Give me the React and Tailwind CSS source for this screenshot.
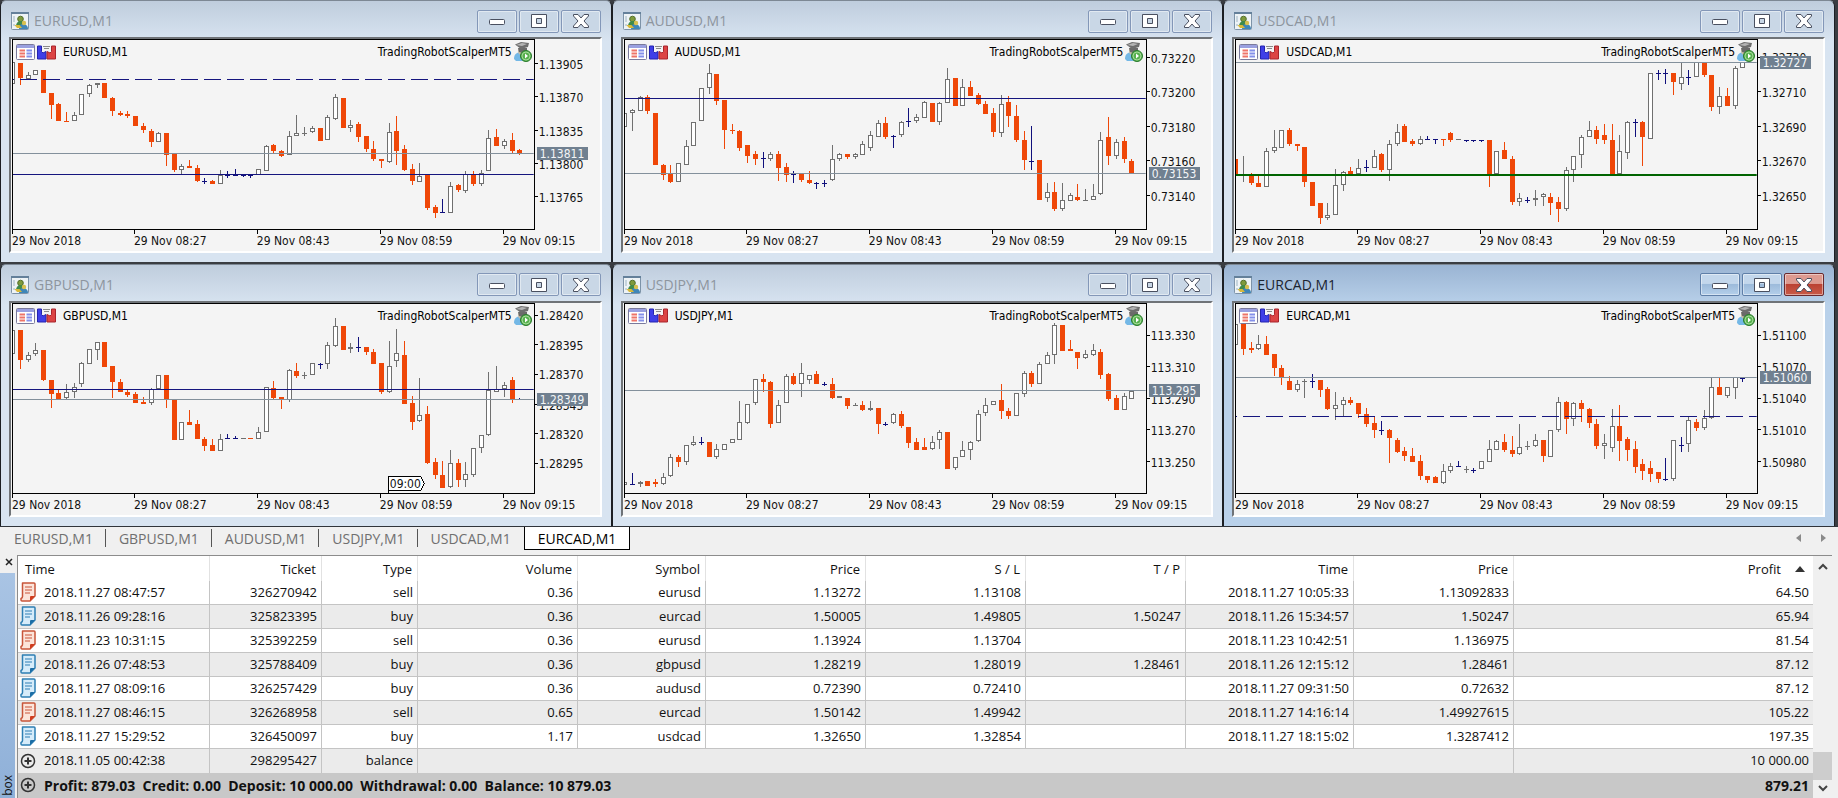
import { clsx } from 'clsx'

const PLOT = { left: 13, top: 40, right: 534, bottom: 230 }
const STEP = 7.68

// Candles run left to right, one per minute: kind + high,top,bottom,low in thirds of a pixel.
// u = up, d = down, j = doji, g = grey doji
const CHARTS = [
  {
    symbol: 'EURUSD',
    base: 118,
    ticks: [['1.13905', 191], ['1.13870', 289], ['1.13835', 391], ['1.13800', 491], ['1.13765', 589]],
    bid: ['1.13811', 459],
    lines: [{ y: 238, dashed: true }, { y: 523 }],
    candles:
      'u184,184,252,252 d187,187,233,254 u215,223,236,236 u208,208,223,223 d208,208,277,277 d277,277,313,357 d309,312,362,362 d334,361,365,365 u334,344,363,363 u280,280,344,344 ' +
      'u250,254,281,290 u247,249,255,263 d248,248,292,292 d290,292,332,348 d333,337,345,348 d332,340,347,354 d346,346,376,376 d367,376,388,397 d385,391,426,440 u396,398,424,424 ' +
      'd398,398,465,497 d460,460,510,516 u490,496,508,523 d478,498,503,504 d495,504,543,545 j534,543,543,552 d538,541,551,552 u510,523,550,552 j513,524,524,533 j507,524,524,524 ' +
      'j524,525,525,531 j524,525,525,532 u507,507,523,523 u433,436,511,511 d431,435,453,459 d450,453,466,469 u392,406,463,465 u343,397,406,408 g379,398,398,406 u378,384,395,399 ' +
      'd384,384,422,422 u343,351,418,420 u280,291,355,358 d292,292,382,382 u358,373,382,395 d366,372,410,425 d408,408,447,455 d423,447,476,482 d475,475,483,503 u369,395,485,488 ' +
      'd347,392,451,495 d434,447,508,513 d490,507,542,554 u489,528,545,545 d523,523,623,630 d615,621,638,654 j597,636,636,637 u545,556,637,638 d551,555,570,575 u513,522,571,577 ' +
      'd513,522,551,557 u508,517,551,558 u389,412,511,513 d386,411,437,438 u416,421,437,446 d399,420,452,459 d445,449,459,464',
  },
  {
    symbol: 'AUDUSD',
    base: 118,
    ticks: [['0.73220', 172], ['0.73200', 274], ['0.73180', 379], ['0.73160', 482], ['0.73140', 586]],
    bid: ['0.73153', 520],
    lines: [{ y: 296 }],
    candles:
      'u337,337,379,379 u325,330,338,392 u287,289,332,332 d285,289,332,340 d337,337,493,495 d490,493,523,540 d495,520,545,547 u487,487,545,545 u418,436,494,494 u364,364,436,436 ' +
      'u262,262,363,363 u190,217,263,281 d222,222,302,314 d300,300,390,447 d372,388,392,400 d389,391,442,452 d435,435,468,488 d451,462,476,494 j454,474,474,503 u456,461,475,483 ' +
      'd451,461,502,541 d487,501,524,545 j513,522,522,547 d520,520,540,545 d513,539,548,550 j545,548,548,566 j538,547,547,559 u434,475,539,541 u459,461,477,483 d460,461,471,475 ' +
      'u457,461,470,476 u423,430,463,463 u391,403,442,451 u359,367,410,411 d350,367,410,416 j403,408,408,444 u363,364,404,411 j323,363,363,381 u340,351,363,367 u301,306,352,353 ' +
      'd307,307,364,364 u306,307,364,373 u202,235,307,308 d234,234,316,316 u236,259,317,317 d242,260,287,288 d279,285,312,313 d301,311,341,342 d324,337,394,409 u284,312,398,410 ' +
      'd288,306,347,380 d314,346,419,426 d391,418,478,509 j378,481,481,509 d480,480,600,600 u547,574,592,606 d545,574,627,632 u547,598,626,632 u578,585,601,601 d552,591,600,601 ' +
      'g565,598,598,598 u552,586,599,599 u396,419,580,585 d351,409,467,495 u415,424,468,476 d409,423,476,488 d475,481,519,520',
  },
  {
    symbol: 'USDCAD',
    base: 118,
    ticks: [['1.32730', 171], ['1.32710', 274], ['1.32690', 379], ['1.32670', 482], ['1.32650', 586]],
    bid: ['1.32727', 186],
    lines: [{ y: 526, color: '#006400', width: 2 }],
    candles:
      'd475,475,526,526 g466,524,524,545 d518,520,547,555 d521,547,560,560 u442,451,559,560 u389,441,451,458 u388,388,443,443 d383,388,430,437 d430,430,437,451 d441,441,545,560 ' +
      'd545,545,618,618 d609,609,653,670 u609,643,654,658 u507,553,643,644 u513,514,554,572 d501,513,520,524 u475,502,520,524 j480,500,500,515 u448,466,502,503 d459,461,509,515 ' +
      'u418,431,508,541 u372,395,430,437 d372,378,425,426 d417,423,431,438 u408,416,431,435 j408,416,416,419 j415,416,416,432 d415,415,419,437 d396,397,419,426 g415,417,417,419 ' +
      'j418,418,418,426 j418,418,418,426 j418,418,418,426 d418,418,524,560 u451,451,520,520 d424,450,475,476 d466,475,606,614 u579,592,606,618 j589,598,598,608 u569,592,598,618 ' +
      'u579,580,591,618 d579,591,607,644 d590,604,626,665 u500,508,626,633 u466,466,508,545 u403,409,463,503 u363,388,410,411 d377,388,416,431 d371,403,419,431 d371,418,521,526 ' +
      'u403,451,520,521 u363,364,457,476 j356,364,364,411 d363,364,410,497 u217,217,416,416 j209,217,217,238 j207,217,217,250 d217,217,244,283 u188,230,250,269 j209,229,229,255 ' +
      'u185,186,229,230 d184,186,223,230 d223,223,321,333 u260,286,321,342 d262,286,317,318 u196,202,316,326 u185,185,203,204',
  },
  {
    symbol: 'GBPUSD',
    base: 125,
    ticks: [['1.28420', 160], ['1.28395', 248], ['1.28370', 337], ['1.28345', 428], ['1.28320', 516], ['1.28295', 604]],
    bid: ['1.28349', 412],
    lines: [{ y: 382 }],
    flag: '09:00',
    candles:
      'u204,204,277,277 d204,204,294,321 u270,280,295,301 u244,265,275,282 d265,265,355,356 d354,354,396,437 d381,393,412,412 u367,391,409,410 u362,374,390,407 u301,302,367,374 ' +
      'u262,262,306,306 u241,241,265,294 d239,241,314,315 d312,313,359,408 d350,359,390,391 d383,390,400,405 d391,397,422,423 d404,419,425,426 u377,380,424,430 u340,340,380,380 ' +
      'd340,340,412,439 d410,412,534,535 u481,481,534,534 d443,480,488,489 d473,486,530,532 d526,530,551,566 d531,549,566,567 u517,530,566,566 j515,529,529,530 j522,529,529,530 ' +
      'g527,527,527,532 d527,527,530,532 u495,510,530,531 u376,376,511,511 d358,379,408,412 d405,406,415,440 u320,323,415,421 d302,327,342,348 g331,338,338,352 u304,304,338,338 ' +
      'j303,305,305,320 u241,248,306,322 u167,193,253,256 d193,193,263,263 u242,254,262,273 j225,254,254,271 d254,254,271,278 d262,270,305,307 d303,303,390,396 u238,313,390,392 ' +
      'u201,274,296,315 d238,279,425,427 d403,422,479,503 u348,458,478,480 d433,457,603,606 d587,601,640,650 d598,639,677,678 u565,604,676,678 d590,604,654,674 u601,636,654,674 ' +
      'u558,559,640,646 u518,518,559,572 u331,384,518,521 u313,381,389,390 u361,369,381,404 d346,353,412,423 j409,411,411,413',
  },
  {
    symbol: 'USDJPY',
    base: 125,
    ticks: [['113.330', 220], ['113.310', 314], ['113.290', 411], ['113.270', 504], ['113.250', 599]],
    bid: ['113.295', 385],
    lines: [],
    candles:
      'u660,660,670,670 j633,665,665,666 u657,660,666,675 d657,658,671,673 d650,660,667,674 u632,646,665,670 u575,584,643,644 d578,584,599,614 u550,550,599,608 u523,539,550,551 ' +
      'j526,539,539,549 d540,541,584,585 u547,562,586,591 u547,547,563,563 u532,532,542,542 u418,481,533,534 u425,425,482,485 u352,352,424,430 d337,351,359,390 d358,360,486,497 ' +
      'u414,430,484,484 u335,343,424,424 d334,343,367,368 u304,334,367,405 u338,338,353,367 d328,336,366,367 j361,366,366,373 d347,366,409,411 u403,403,409,409 d408,408,433,440 ' +
      'g424,430,430,432 d418,430,444,446 u418,437,444,446 d438,438,485,515 j480,486,486,492 u454,455,484,485 d446,455,491,497 d494,494,542,557 d527,541,563,564 d527,555,563,564 ' +
      'u523,539,562,563 u503,511,533,562 d509,509,620,620 u584,584,619,624 u538,565,584,585 u538,539,565,593 u443,457,538,539 u408,430,454,461 u416,416,430,430 d366,415,447,471 ' +
      'd438,447,461,471 u394,394,461,461 u327,334,395,404 d328,334,367,376 u299,307,367,367 u271,280,306,307 u184,190,280,307 d189,189,266,266 d234,262,266,267 d270,270,287,321 ' +
      'u265,276,287,292 u247,265,280,281 d262,270,338,350 d333,337,410,416 d400,408,444,445 u393,403,444,445 u387,388,410,411',
  },
  {
    symbol: 'EURCAD',
    base: 125,
    active: true,
    ticks: [['1.51100', 220], ['1.51070', 314], ['1.51040', 409], ['1.51010', 504], ['1.50980', 599]],
    bid: ['1.51060', 346],
    lines: [{ y: 464, dashed: true }],
    candles:
      'u186,186,250,250 d186,186,260,280 d240,259,264,273 u219,247,262,263 d222,247,278,279 d277,277,319,342 d308,318,346,370 d343,357,384,385 u355,366,384,391 g350,358,358,408 ' +
      'j337,357,357,379 d354,354,384,405 d375,381,440,445 u391,430,442,473 u405,415,430,465 d405,415,424,430 d423,423,456,467 d438,457,485,494 d462,483,505,528 j478,504,504,520 ' +
      'd502,504,529,603 d529,535,569,574 d555,568,583,596 d558,582,599,600 d580,598,642,653 d641,643,654,662 d642,645,662,663 u606,626,662,666 u603,612,626,632 j597,612,612,614 ' +
      'g612,622,622,634 j619,623,623,633 u598,598,622,622 u534,562,599,599 u535,538,563,563 d517,540,565,569 d523,564,577,584 u486,556,577,580 g536,551,551,563 u515,535,551,556 ' +
      'd535,535,583,600 u504,504,584,584 u406,421,505,509 d417,420,472,517 u419,423,472,493 d414,423,441,480 d438,440,482,497 d471,487,551,560 u517,543,551,592 u440,492,557,569 ' +
      'd429,492,536,597 d524,531,565,597 d536,562,614,632 d592,606,626,655 d598,618,637,661 d629,630,652,663 j587,650,650,657 u534,535,651,657 j525,549,549,570 u466,475,547,570 ' +
      'd471,480,498,506 u443,469,499,505 u346,376,469,471 d345,376,399,400 u375,376,401,409 u345,346,377,410 j345,347,347,361',
  },
]

const TIMES = ['29 Nov 2018', '29 Nov 08:27', '29 Nov 08:43', '29 Nov 08:59', '29 Nov 09:15']
const COLORS = { u: '#707070', g: '#707070', d: '#ef4708', j: '#10107c' }
const TABS = ['EURUSD,M1', 'GBPUSD,M1', 'AUDUSD,M1', 'USDJPY,M1', 'USDCAD,M1', 'EURCAD,M1']

const COLUMNS = [
  ['Time', 'w-[192px]'],
  ['Ticket', 'w-[112px]'],
  ['Type', 'w-[96px]'],
  ['Volume', 'w-[160px]'],
  ['Symbol', 'w-[128px]'],
  ['Price', 'w-[160px]'],
  ['S / L', 'w-[160px]'],
  ['T / P', 'w-[160px]'],
  ['Time', 'w-[168px]'],
  ['Price', 'w-[160px]'],
  ['Profit', ''],
]

const TRADES = [
  ['2018.11.27 08:47:57', '326270942', 'sell', '0.36', 'eurusd', '1.13272', '1.13108', '', '2018.11.27 10:05:33', '1.13092833', '64.50'],
  ['2018.11.26 09:28:16', '325823395', 'buy', '0.36', 'eurcad', '1.50005', '1.49805', '1.50247', '2018.11.26 15:34:57', '1.50247', '65.94'],
  ['2018.11.23 10:31:15', '325392259', 'sell', '0.36', 'eurusd', '1.13924', '1.13704', '', '2018.11.23 10:42:51', '1.136975', '81.54'],
  ['2018.11.26 07:48:53', '325788409', 'buy', '0.36', 'gbpusd', '1.28219', '1.28019', '1.28461', '2018.11.26 12:15:12', '1.28461', '87.12'],
  ['2018.11.27 08:09:16', '326257429', 'buy', '0.36', 'audusd', '0.72390', '0.72410', '', '2018.11.27 09:31:50', '0.72632', '87.12'],
  ['2018.11.27 08:46:15', '326268958', 'sell', '0.65', 'eurcad', '1.50142', '1.49942', '', '2018.11.27 14:16:14', '1.49927615', '105.22'],
  ['2018.11.27 15:29:52', '326450097', 'buy', '1.17', 'usdcad', '1.32650', '1.32854', '', '2018.11.27 18:15:02', '1.3287412', '197.35'],
]

function WindowIcon() {
  return (
    <svg viewBox="0 0 18 18" className="size-[18px]" aria-hidden="true">
      <rect x="0.5" y="0.5" width="17" height="17" rx="1" fill="#eef3f6" stroke="#7d93a8" />
      <path d="M0 1h18" stroke="#64809a" strokeWidth="2" />
      <path d="M3 4v6M3 12v2" stroke="#9db4c4" />
      <circle cx="9.5" cy="7" r="2.8" fill="#7e9a3c" stroke="#54702c" />
      <path d="M5 14c0-3 2-5 4.500-5s4.500 2 4.500 5z" fill="#3f8a4c" />
      <path d="M8 17c0-3.500 1.500-5 4-5s5 1.500 5 5z" fill="#3f86b8" />
      <circle cx="13" cy="11" r="2.200" fill="#d8c050" />
      <path d="M3.500 13h5l2.500 3H6z" fill="#d9b93a" />
    </svg>
  )
}

function ListIcon() {
  return (
    <svg viewBox="0 0 19 16" className="h-4 w-[19px]" aria-hidden="true">
      <rect x="0.5" y="0.5" width="18" height="15" rx="1" fill="#fff" stroke="#7a7a9c" />
      <rect x="1" y="1" width="17" height="3" fill="#9aa0e0" />
      <path d="M3.500 6.500h5.500M3.500 9.500h5.500M3.500 12.500h5.500" stroke="#ee7468" strokeWidth="2" />
      <path d="M10.500 6.500h5.500M10.500 9.500h5.500M10.500 12.500h5.500" stroke="#8490ea" strokeWidth="2" />
    </svg>
  )
}

function DepthIcon() {
  return (
    <svg viewBox="0 0 19 15" className="h-[15px] w-[19px]" aria-hidden="true">
      <path d="M.5 1h4v5.500L6 8l3-1.500V14H.5z" fill="#3f3fe8" stroke="#2424b0" />
      <path d="M18.500 1h-4v5.500L13 8l-3-1.500V14h8.500z" fill="#dc4444" stroke="#a8242c" />
      <path d="M6 1.500h7M7 3.500h5" stroke="#8a8a8a" />
    </svg>
  )
}

function RobotIcon() {
  return (
    <svg viewBox="0 0 18 20" className="h-5 w-[18px]" aria-hidden="true">
      <path d="M0 17c0-5 3-7 7-7s6 3 6 9H2z" fill="#74b8e6" />
      <circle cx="8" cy="9" r="4" fill="#c8bda8" />
      <path d="M4 6h9v4l-4 1-4-1z" fill="#6a6a6a" />
      <path d="M1 2.500L7 0l8 1-1 4-7 2z" fill="#6e6e6e" />
      <path d="M2 3l6-2 5 1-5 2z" fill="#b4b4b4" />
      <circle cx="12" cy="14" r="5.500" fill="#57b04e" stroke="#2a7a2e" />
      <circle cx="12" cy="14" r="4" fill="none" stroke="#a4dc98" />
      <path d="M11 11.500v5l3-2.500z" fill="#fff" />
    </svg>
  )
}

function DocIcon({ sell }) {
  const ink = sell ? '#c8553a' : '#2e7fb4'
  return (
    <svg viewBox="0 0 16 20" className="h-5 w-4" aria-hidden="true">
      <path
        d="M2.500 1h11.500q1 0 1 1v12l-5 5H2q-1 0-1-1v-1.500q1.500-.5 1.500-2z"
        fill={sell ? '#fce4da' : '#d6ecfa'}
        stroke={ink}
        strokeWidth="1.500"
        strokeLinejoin="round"
      />
      <path d="M5 5h7M5 8h7M5 11h5" stroke={ink} />
      <path d="M10 19v-4q0-1 1-1h4z" fill={sell ? '#d03c1e' : '#1c6ea6'} />
    </svg>
  )
}

function PlusIcon() {
  return (
    <svg viewBox="0 0 16 16" className="size-4" fill="none" stroke="#333" strokeWidth="1.500" aria-hidden="true">
      <circle cx="8" cy="8" r="6.500" />
      <path d="M8 4.500v7M4.500 8h7" strokeWidth="2" />
    </svg>
  )
}

function WindowButton({ label, active, danger, children }) {
  return (
    <button
      aria-label={label}
      className={clsx(
        'flex h-[23px] w-10 items-center justify-center rounded-[2px] border shadow-[inset_0_0_0_1px_rgba(255,255,255,0.45)]',
        danger && 'border-[#6b2a2e] bg-linear-to-b from-[#dd9a90] from-45% via-[#bb4233] via-50% to-[#c85a48]',
        active && !danger && 'border-[#5f7fa8] bg-linear-to-b from-[#c3d7ec] from-45% via-[#9dbbdb] via-50% to-[#b4cfea]',
        !active && 'border-[#8397b8] bg-[#c9d7e6]'
      )}
    >
      <svg viewBox="0 0 18 16" className="h-4 w-[18px]" fill="#fff" stroke="#4a5060" aria-hidden="true">
        {children}
      </svg>
    </button>
  )
}

function Candle({ code, index, toY }) {
  const kind = code[0]
  const [high, top, bottom, low] = code.slice(1).split(',').map((v) => Math.round(toY(Number(v))))
  const x = Math.round(PLOT.left - 0.7 + index * STEP)
  const color = COLORS[kind]
  const flat = kind === 'j' || kind === 'g'
  return (
    <g>
      <rect x={x} y={high} width="1" height={Math.max(low - high, 1)} fill={color} />
      {flat && <rect x={x - 2} y={top} width="5" height="1" fill={color} />}
      {kind === 'd' && <rect x={x - 2} y={top} width="5" height={Math.max(bottom - top, 1)} fill={color} />}
      {kind === 'u' && (
        <rect x={x - 1.5} y={top + 0.5} width="4" height={Math.max(bottom - top - 1, 1)} fill="#fff" stroke={color} />
      )}
    </g>
  )
}

function Chart({ chart }) {
  const { base, ticks, bid, lines, candles, flag } = chart
  const toY = (v) => PLOT.top - 0.5 + (v - base) / 3
  const snap = (v) => Math.floor(toY(v)) + 0.5
  const { left, top, right, bottom } = PLOT
  const bidY = snap(bid[1])

  return (
    <svg
      viewBox="11 39 589 212"
      className="block h-auto w-full font-['DejaVu_Sans_Condensed','Noto_Sans',sans-serif] text-[12px]"
      shapeRendering="crispEdges"
      role="img"
      aria-label={`${chart.symbol} one minute chart`}
    >
      <svg x={left} y={top} width={right - left} height={bottom - top} viewBox={`${left} ${top} ${right - left} ${bottom - top}`}>
        {candles.split(' ').map((code, i) => (
          <Candle key={i} code={code} index={i} toY={toY} />
        ))}
        {lines.map((l) => (
          <path
            key={l.y}
            d={`M${left} ${snap(l.y)}H${right}`}
            stroke={l.color ?? '#15157e'}
            strokeWidth={l.width ?? 1}
            strokeDasharray={l.dashed ? '17 6' : undefined}
            strokeDashoffset={l.dashed ? 16 : undefined}
          />
        ))}
        <path d={`M${left} ${bidY}H${right}`} stroke="#83909c" />
      </svg>
      <rect x={left - 0.5} y={top - 0.5} width={right - left + 1} height={bottom - top} fill="none" stroke="#000" />

      {/* price scale */}
      {ticks.map(([label, y]) => (
        <g key={label}>
          <path d={`M${right} ${snap(y)}h4`} stroke="#000" />
          <text x="539" y={Math.round(toY(y)) + 5} fill="#111">
            {label}
          </text>
        </g>
      ))}
      <rect x="537" y={bidY - 6.5} width="51" height="13" fill="#708090" />
      <text x="540" y={bidY + 4.5} fill="#f4f6f8">
        {bid[0]}
      </text>

      {/* time scale */}
      {TIMES.map((label, i) => (
        <g key={label}>
          <path d={`M${Math.floor(left + i * STEP * 16) - 0.5} ${bottom}v4`} stroke="#000" />
          <text x={Math.floor(left + i * STEP * 16) - 1} y="245" fill="#111">
            {label}
          </text>
        </g>
      ))}

      {flag && (
        <g>
          <path d="M388.500 230V212.500H421L424.500 219.500L421 226.500H388.500" fill="#fff" stroke="#000" />
          <text x="390" y="224" fill="#111">
            {flag}
          </text>
        </g>
      )}
    </svg>
  )
}

function ChartWindow({ chart }) {
  const { symbol, active } = chart
  return (
    <section
      className={clsx(
        'rounded-t-md border-x border-t border-x-[#1c1f24] border-t-[#7d8894] pr-[9px] pb-[9px] pl-2',
        active
          ? 'bg-[#b9d1ea] bg-linear-to-b from-[#9ab4d3] to-[#b9d1ea] to-[40px]'
          : 'bg-[#d8e4f1] bg-linear-to-b from-[#bfcddd] to-[#d8e4f1] to-[40px]'
      )}
    >
      <header className="flex h-9 items-center gap-[5px] pt-1 pr-px pl-[2px]">
        <WindowIcon />
        <h2 className={clsx('flex-1 text-[14px] leading-5', active ? 'text-[#1b2430]' : 'text-[#8d959e]')}>{symbol},M1</h2>
        <div className="flex gap-[2px]">
          <WindowButton label="Minimize" active={active}>
            <rect x="1.500" y="6.500" width="15" height="5" rx="1" />
          </WindowButton>
          <WindowButton label="Maximize" active={active}>
            <path fillRule="evenodd" d="M1.500 1.500h15v13h-15zM6.500 5.500h5v5h-5z" />
          </WindowButton>
          <WindowButton label="Close" active={active} danger={active}>
            <path
              d="M1.500 1.500h4.500L9 5l3-3.500h4.500v1.500L12 8l4.500 5v1.500H12L9 11l-3 3.500H1.500V13L6 8 1.500 3z"
              strokeLinejoin="round"
            />
          </WindowButton>
        </div>
      </header>
      <div className="relative border-2 border-t-[#6f7377] border-r-white border-b-white border-l-[#6f7377] bg-[#f4f4f4]">
        <Chart chart={chart} />
        {/* labels over the plot */}
        <div className="absolute top-[3px] right-[68px] left-[5px] flex items-center font-['DejaVu_Sans_Condensed','Noto_Sans',sans-serif] text-[12px] leading-5 text-black">
          <ListIcon />
          <span className="ml-[2px]">
            <DepthIcon />
          </span>
          <span className="ml-[7px] flex-1">{symbol},M1</span>
          <span className="mr-[2px]">TradingRobotScalperMT5</span>
          <RobotIcon />
        </div>
      </div>
    </section>
  )
}

function TabStrip() {
  return (
    <nav className="flex h-6 items-start border-t border-[#30343a] bg-[#f0f0f0] pl-px text-[14px]">
      {TABS.map((tab, i) => {
        const selected = i === TABS.length - 1
        return (
          <button
            key={tab}
            className={clsx(
              'px-[13px] leading-[23px]',
              selected ? 'h-[23px] border-x border-b border-black bg-white leading-[22px] text-black' : 'text-[#6f6f6f]',
              !selected && i < TABS.length - 2 && 'bg-[linear-gradient(#555,#555)] bg-[length:1px_18px] bg-right bg-no-repeat'
            )}
          >
            {tab}
          </button>
        )
      })}
      <div className="ml-auto flex gap-5 self-center pr-3">
        <button aria-label="Scroll tabs left">
          <svg viewBox="0 0 5 8" className="h-2 w-[5px]" fill="#8a8a8a">
            <path d="M5 0v8L0 4z" />
          </svg>
        </button>
        <button aria-label="Scroll tabs right">
          <svg viewBox="0 0 5 8" className="h-2 w-[5px]" fill="#8a8a8a">
            <path d="M0 0v8l5-4z" />
          </svg>
        </button>
      </div>
    </nav>
  )
}

function HistoryTable() {
  const cell = 'border-r border-[#c4c4c4] pr-1 text-right last:border-r-0'
  return (
    <table className="w-full table-fixed border-separate border-spacing-0 bg-white text-[13px] leading-[23px] whitespace-nowrap text-[#111]">
      <thead>
        <tr>
          {COLUMNS.map(([name, width], i) => (
            <th
              key={i}
              scope="col"
              className={clsx(
                'border-r border-[#e2e2e2] p-0 pt-[2px] font-normal last:border-r-0',
                i === 0 ? 'pl-[7px] text-left' : 'pr-[5px] text-right',
                width
              )}
            >
              {name === 'Profit' ? (
                <button className="ml-auto flex items-center gap-[14px] pr-[3px]">
                  {name}
                  <svg viewBox="0 0 10 6" className="h-[6px] w-[10px]" fill="#333" aria-hidden="true">
                    <path d="M5 0l5 6H0z" />
                  </svg>
                </button>
              ) : (
                name
              )}
            </th>
          ))}
        </tr>
      </thead>
      <tbody>
        {TRADES.map((row, r) => (
          <tr key={row[1]} className={r % 2 ? 'bg-[#ebebeb]' : 'bg-white'}>
            {row.map((value, i) => (
              <td key={i} className={clsx(cell, 'border-b', i === 0 && 'text-left')}>
                {i === 0 ? (
                  <span className="flex h-[23px] items-center gap-2 pl-[2px]">
                    <DocIcon sell={row[2] === 'sell'} />
                    {value}
                  </span>
                ) : (
                  value
                )}
              </td>
            ))}
          </tr>
        ))}
        <tr className="bg-[#ebebeb]">
          <td className={cell}>
            <span className="flex h-6 items-center gap-2 pl-[2px]">
              <PlusIcon />
              2018.11.05 00:42:38
            </span>
          </td>
          <td className={cell}>298295427</td>
          <td className={cell}>balance</td>
          <td className={cell} colSpan={7} />
          <td className={cell}>10 000.00</td>
        </tr>
      </tbody>
      <tfoot>
        <tr className="bg-[#c8c8c8] text-[14px] font-bold">
          <td colSpan={10}>
            <span className="flex h-[25px] items-center gap-2 pl-[2px] whitespace-pre">
              <PlusIcon />
              {'Profit: 879.03  Credit: 0.00  Deposit: 10 000.00  Withdrawal: 0.00  Balance: 10 879.03'}
            </span>
          </td>
          <td className="pr-1 text-right">879.21</td>
        </tr>
      </tfoot>
    </table>
  )
}

function Toolbox() {
  return (
    <div className="flex bg-[#f0f0f0] pt-[5px] pr-[6px]">
      <aside className="flex w-[17px] flex-col">
        <button aria-label="Close toolbox" className="flex h-[18px] items-center justify-center pb-1">
          <svg viewBox="0 0 8 8" className="size-2" stroke="#222" strokeWidth="1.500">
            <path d="M1 1l6 6M7 1L1 7" />
          </svg>
        </button>
        <div className="mr-[2px] flex flex-1 items-end justify-center bg-linear-to-b from-[#a9c4e4] to-[#8fb0d8] pb-[2px]">
          <span className="rotate-180 text-[12px] leading-[15px] text-[#111] [writing-mode:vertical-rl]">box</span>
        </div>
      </aside>
      <div className="flex min-w-0 flex-1 border-t border-l border-[#8c8c8c]">
        <div className="min-w-0 flex-1">
          <HistoryTable />
        </div>
        <div className="flex w-[19px] flex-col items-center bg-[#f0f0f0]">
          <button aria-label="Scroll up" className="flex h-[22px] items-center">
            <svg viewBox="0 0 10 7" className="h-[7px] w-[10px]" fill="none" stroke="#444" strokeWidth="2">
              <path d="M1 6l4-4 4 4" />
            </svg>
          </button>
          <div className="flex w-full flex-1 flex-col justify-end">
            <div className="h-7 bg-[#cdcdcd]" />
          </div>
          <button aria-label="Scroll down" className="flex h-[18px] items-center">
            <svg viewBox="0 0 10 7" className="h-[7px] w-[10px]" fill="none" stroke="#444" strokeWidth="2">
              <path d="M1 1l4 4 4-4" />
            </svg>
          </button>
        </div>
      </div>
    </div>
  )
}

export default function App() {
  return (
    <div className="font-['Open_Sans','Noto_Sans',sans-serif]">
      <main className="grid grid-cols-3 gap-y-[2px] bg-[#3a3d42] pr-[3px]">
        {CHARTS.map((chart) => (
          <ChartWindow key={chart.symbol} chart={chart} />
        ))}
      </main>
      <TabStrip />
      <Toolbox />
    </div>
  )
}
